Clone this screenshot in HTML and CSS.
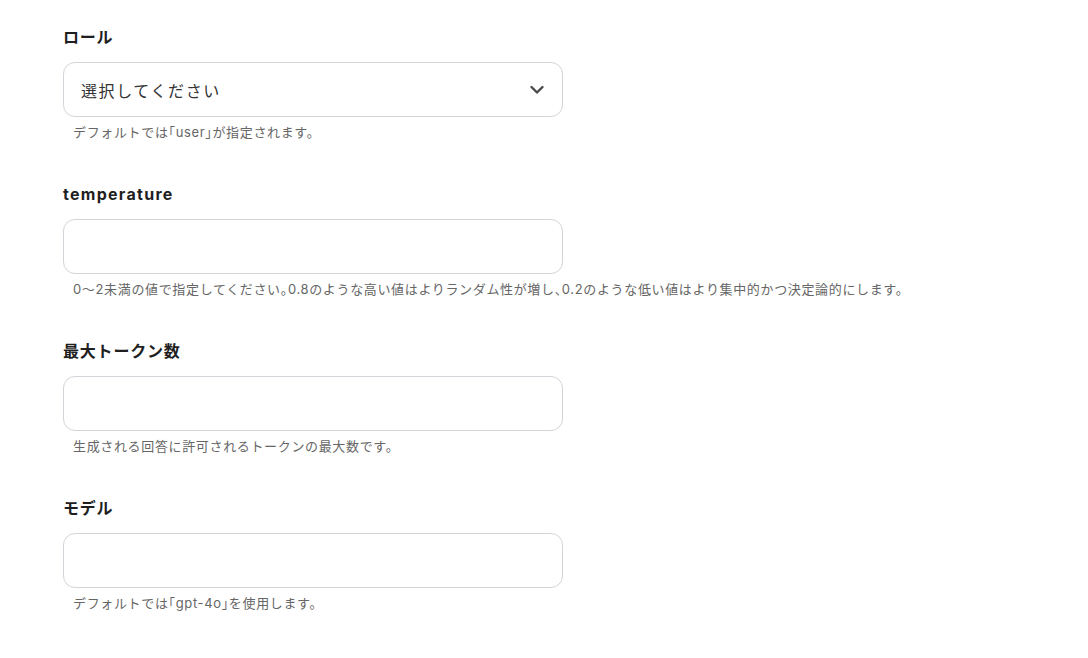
FILE: index.html
```html
<!DOCTYPE html>
<html lang="ja">
<head>
<meta charset="utf-8">
<link rel="stylesheet" href="styles.css">
</head>
<body>
<div class="form">
  <div class="field">
    <div class="label">ロール</div>
    <div class="box select">
      <span class="placeholder">選択してください</span>
      <svg class="chev" width="16" height="16" viewBox="0 0 16 16"><path d="M2.5 5 L8 10.5 L13.5 5" fill="none" stroke="#4a4a4a" stroke-width="2.4" stroke-linecap="round" stroke-linejoin="round"/></svg>
    </div>
    <div class="help">デフォルトでは「user」が指定されます。</div>
  </div>
  <div class="field">
    <div class="label latin">temperature</div>
    <div class="box"></div>
    <div class="help">0〜2未満の値で指定してください。0.8のような高い値はよりランダム性が増し、0.2のような低い値はより集中的かつ決定論的にします。</div>
  </div>
  <div class="field">
    <div class="label">最大トークン数</div>
    <div class="box"></div>
    <div class="help">生成される回答に許可されるトークンの最大数です。</div>
  </div>
  <div class="field">
    <div class="label">モデル</div>
    <div class="box"></div>
    <div class="help">デフォルトでは「gpt-4o」を使用します。</div>
  </div>
</div>
</body>
</html>
```
FILE: styles.css
```css
html, body {
  margin: 0;
  padding: 0;
  background: #fff;
}
body {
  font-family: Inter, "Noto Sans CJK JP", sans-serif;
  color: #222;
}
.form {
  padding: 25px 0 0 63px;
  display: flex;
  flex-direction: column;
  gap: 40px;
}
.field {
  display: flex;
  flex-direction: column;
  width: 500px;
}
.label {
  font-size: 16px;
  font-weight: 700;
  line-height: 24px;
  color: #1f1f1f;
  letter-spacing: 0.05em;
  margin-bottom: 13px;
}
.label.latin {
  letter-spacing: 0.08em;
}
.box {
  box-sizing: border-box;
  height: 55px;
  border: 1px solid #d2d4d9;
  border-radius: 12px;
  background: #fff;
}
.select {
  display: flex;
  align-items: center;
  justify-content: space-between;
  padding: 0 17px 0 17px;
}
.placeholder {
  font-size: 16px;
  letter-spacing: 0.1em;
  color: #333;
}
.chev {
  display: block;
}
.help {
  margin-top: 5px;
  padding-left: 10px;
  font-size: 13px;
  letter-spacing: 0.05em;
  font-feature-settings: "halt";
  line-height: 20px;
  color: #666;
  white-space: nowrap;
}
```
